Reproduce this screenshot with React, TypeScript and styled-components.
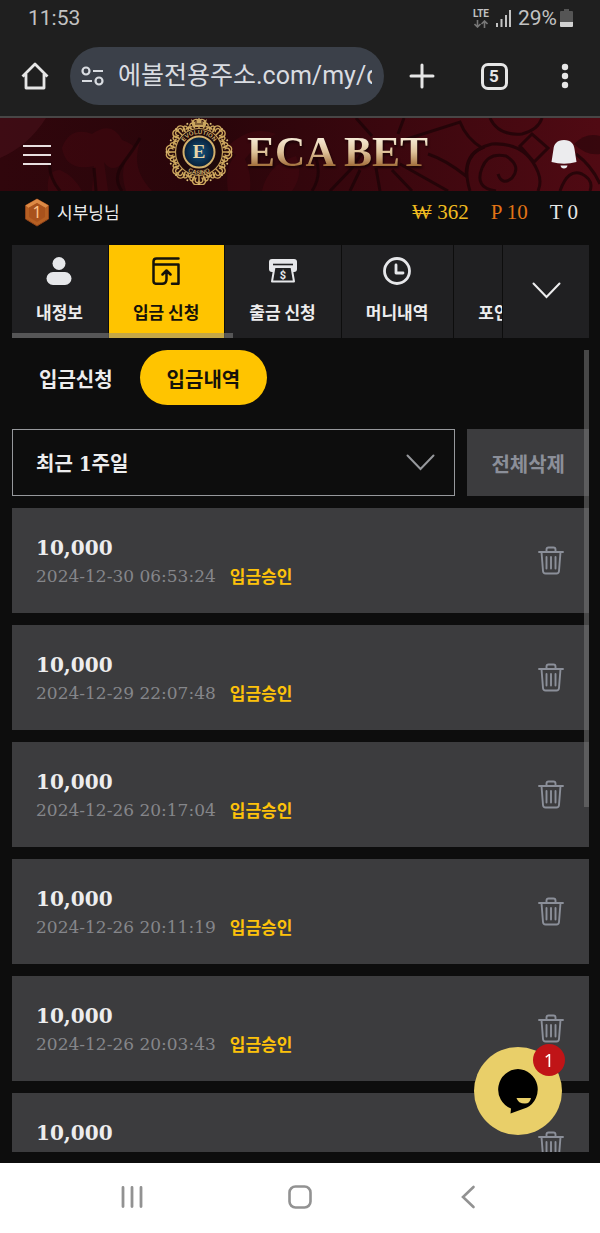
import React from "react";
import styled, { createGlobalStyle, css } from "styled-components";

const sans = `Roboto, "Noto Sans CJK KR", sans-serif`;
const korean = `"Noto Sans CJK KR", sans-serif`;
const serif = `"DejaVu Serif", "Noto Sans CJK KR", serif`;
const serifNarrow = `"DejaVu Serif Condensed", "Noto Sans CJK KR", serif`;
const serifLight = `"Liberation Serif", "DejaVu Serif", serif`;

const GlobalStyle = createGlobalStyle`
  *, *::before, *::after { box-sizing: border-box; }
  body { margin: 0; background: #0d0d0d; }
  button, input, select { font: inherit; color: inherit; margin: 0; padding: 0; border: 0; background: none; border-radius: 0; }
  button { cursor: pointer; }
  h1, p { margin: 0; }
  svg { display: block; flex: none; }
`;

const Screen = styled.div`
  display: flex;
  flex-direction: column;
  height: 100vh;
  background: #0d0d0d;
  color: #ededee;
  font-family: ${korean};
`;

/* ---------- Phone status bar and browser toolbar ---------- */

const StatusBar = styled.div`
  display: flex;
  align-items: center;
  justify-content: space-between;
  height: 36px;
  padding: 0 27px 0 28px;
  background: #1f1f1f;
  color: #c2c2c2;
  font: 21px/24px ${sans};
`;

const StatusIcons = styled.div`
  display: flex;
  align-items: center;
  gap: 6px;
`;

const Network = styled.div`
  display: flex;
  flex-direction: column;
  align-items: center;
  font: 700 10px/10px ${sans};
  gap: 1px;
`;

const Battery = styled.div`
  display: flex;
  align-items: center;
  gap: 3px;
`;

const BrowserBar = styled.div`
  display: flex;
  align-items: center;
  flex: none;
  height: 82px;
  padding: 0 21px;
  background: #1f1f1f;
  border-bottom: 2px solid #484646;
  color: #e6e6e6;
`;

const Address = styled.label`
  display: flex;
  align-items: center;
  flex: 1;
  min-width: 0;
  height: 58px;
  margin-left: 21px;
  padding: 0 12px 0 11px;
  gap: 14px;
  border-radius: 29px;
  background: #3b4049;
`;

const AddressInput = styled.input`
  flex: 1;
  min-width: 0;
  height: 40px;
  outline: none;
  color: #d9dce1;
  font: 25px/40px ${sans};
`;

const BrowserActions = styled.div`
  display: flex;
  align-items: center;
  justify-content: space-between;
  width: 172px;
  margin-left: 23px;
`;

const IconButton = styled.button`
  display: grid;
  place-items: center;
`;

const TabCount = styled.button`
  width: 27px;
  height: 27px;
  border: 3px solid #e6e6e6;
  border-radius: 7px;
  font: 700 17px/20px ${sans};
`;

/* ---------- Site header ---------- */

const Header = styled.header`
  position: relative;
  display: flex;
  align-items: center;
  justify-content: space-between;
  flex: none;
  height: 73px;
  padding: 0 23px;
  overflow: hidden;
  background: linear-gradient(90deg, #30060c 0%, #29050a 35%, #3b070e 65%, #500a13 100%);
`;

const HeaderArt = styled.svg`
  position: absolute;
  inset: 0;
  width: 100%;
  height: 100%;
`;

const HeaderButton = styled(IconButton)`
  position: relative;
`;

const Logo = styled.h1`
  position: relative;
  display: flex;
  align-items: center;
  gap: 14px;
  padding: 0 9px 6px 0;
`;

const Brand = styled.span`
  font: 700 42px/48px "Liberation Serif", serif;
  color: transparent;
  background: linear-gradient(180deg, #f7ecd8 20%, #dec29a 50%, #a06c38 80%);
  background-clip: text;
  -webkit-background-clip: text;
  filter: drop-shadow(1px 2px 1px #180205);
`;

const UserBar = styled.div`
  display: flex;
  align-items: center;
  flex: none;
  height: 42px;
  padding: 0 22px 0 24px;
  gap: 7px;
  font-size: 17px;
  line-height: 24px;
`;

const Balances = styled.div`
  display: flex;
  gap: 22px;
  margin-left: auto;
  font: 21px/24px ${serifLight};
`;

const Balance = styled.span<{ $color: string }>`
  color: ${(p) => p.$color};
`;

/* ---------- Account tabs ---------- */

const TabBar = styled.nav`
  display: flex;
  flex: none;
  gap: 1px;
  height: 93px;
  margin: 12px 11px 12px 12px;
`;

const TabStrip = styled.div`
  position: relative;
  display: flex;
  flex: 1;
  min-width: 0;
  gap: 1px;
  overflow: hidden;

  &::after {
    content: "";
    position: absolute;
    left: 0;
    bottom: 0;
    width: 45%;
    height: 5px;
    background: rgba(140, 140, 140, 0.5);
  }
`;

const Tab = styled.a<{ $active?: boolean }>`
  display: flex;
  flex: none;
  flex-direction: column;
  align-items: center;
  gap: 15px;
  padding: 12px 25px 0 24px;
  background: ${(p) => (p.$active ? "#ffc400" : "#202022")};
  color: ${(p) => (p.$active ? "#15120a" : "#ededee")};
  font-size: 17px;
  font-weight: 700;
  line-height: 24px;
  text-decoration: none;
  white-space: nowrap;
`;

const ExpandButton = styled(IconButton)`
  width: 86px;
  padding-bottom: 3px;
  background: #202022;
`;

/* ---------- Deposit history ---------- */

const Content = styled.main`
  position: relative;
  flex: 1;
  min-height: 0;
  margin: 0 11px 11px 12px;

  &::after {
    content: "";
    position: absolute;
    top: 0;
    right: 0;
    width: 5px;
    height: 57%;
    background: rgba(120, 120, 120, 0.55);
  }
`;

const Scroller = styled.div`
  height: 100%;
  overflow-y: auto;
  scrollbar-width: none;
`;

const SubTabs = styled.div`
  display: flex;
  margin-bottom: 24px;
`;

const SubTab = styled.button<{ $active?: boolean }>`
  height: 55px;
  padding: 2px 27px 0;
  border-radius: 28px;
  font: 700 20px/28px ${korean};
  ${(p) =>
    p.$active &&
    css`
      background: #ffc400;
      color: #15120a;
    `}
`;

const Filters = styled.div`
  display: flex;
  gap: 12px;
  height: 67px;
  margin-bottom: 12px;
`;

const SelectBox = styled.label`
  display: flex;
  align-items: center;
  flex: 1;
  padding-right: 19px;
  border: 1px solid #96989c;
`;

const Select = styled.select`
  appearance: none;
  flex: 1;
  height: 64px;
  padding: 2px 0 0 23px;
  outline: none;
  font: 700 20px/28px ${serifNarrow};
`;

const DeleteAll = styled.button`
  padding: 2px 24px 0;
  background: #3c3c3e;
  color: #8b8f99;
  font: 700 20px/28px ${korean};
`;

const List = styled.ul`
  display: flex;
  flex-direction: column;
  gap: 12px;
  margin: 0;
  padding: 0;
  list-style: none;
`;

const Row = styled.li`
  display: flex;
  align-items: center;
  justify-content: space-between;
  height: 105px;
  padding: 0 25px 0 24px;
  background: #3c3c3e;
  color: #8b8f99;
`;

const Entry = styled.div`
  padding-top: 3px;
`;

const Amount = styled.p`
  color: #ededee;
  font: 700 20px/28px ${serif};
`;

const Detail = styled.p`
  display: flex;
  gap: 14px;
  color: #85868a;
  font: 17px/28px ${serif};
`;

const Approved = styled.strong`
  color: #fdc20a;
  font-family: ${korean};
`;

/* ---------- Floating chat and phone navigation ---------- */

const ChatButton = styled.button`
  position: fixed;
  right: 38px;
  bottom: 98px;
  display: grid;
  place-items: center;
  width: 88px;
  height: 88px;
  border-radius: 50%;
  background: #e9cf69;
`;

const Badge = styled.span`
  position: absolute;
  top: -3px;
  right: -3px;
  width: 32px;
  height: 32px;
  border-radius: 50%;
  background: #c01417;
  color: #fff;
  font: 18px/32px "Noto Sans", sans-serif;
`;

const PhoneNav = styled.nav`
  display: flex;
  align-items: center;
  justify-content: space-around;
  flex: none;
  height: 70px;
  padding: 0 48px 3px;
  background: #fff;
`;

/* ---------- Drawings ---------- */

const Emblem = () => {
  const petals = Array.from({ length: 16 }, (_, i) => i * 22.5);
  return (
    <svg width="68" height="67" viewBox="-34 -34 68 67" aria-hidden="true">
      <defs>
        <radialGradient id="navy">
          <stop offset="0" stopColor="#165783" />
          <stop offset="1" stopColor="#071d35" />
        </radialGradient>
        <path id="arcTop" d="M-18 0A18 18 0 0 1 18 0" />
        <path id="arcBottom" d="M-22.500 0A22.500 22.500 0 0 0 22.500 0" />
      </defs>
      <circle r="27" fill="none" stroke="#2a0d0c" strokeWidth="7" />
      <g fill="none" stroke="#cfa95f" strokeWidth="1.4" strokeLinecap="round">
        {petals.map((a, i) => (
          <g key={a} transform={`rotate(${a})`}>
            <path
              d={
                i % 2
                  ? "M-5-24C-7-28-4-31-2-28.500S-4-26-3-26M5-24C7-28 4-31 2-28.500S4-26 3-26M-2-24L0-27L2-24"
                  : "M-5-25C-9-30-4-35 0-31.500C4-35 9-30 5-25M-3-26C-6-30 0-33 0-28C0-33 6-30 3-26M0-28V-24"
              }
            />
            <circle cy={i % 2 ? -30.5 : -32.5} r="1" fill="#e0c07a" stroke="none" />
          </g>
        ))}
      </g>
      <circle r="23.5" fill="#1f090a" stroke="#c5a05b" strokeWidth="1.2" />
      <circle r="15.500" fill="url(#navy)" stroke="#d2b06c" strokeWidth="2" />
      <path d="M-6-25L-8-33L-4-30L0-34L4-30L8-33L6-25Z" fill="#c9a55f" />
      <path d="M-4-28H4M-3-31V-29M3-31V-29" stroke="#3a1c10" strokeWidth="1" />
      <g fill="#d2b06c" fontFamily="Liberation Sans, sans-serif" fontSize="6" fontWeight="700" textAnchor="middle">
        <text>
          <textPath href="#arcTop" startOffset="50%">EVOLUTION</textPath>
        </text>
        <text>
          <textPath href="#arcBottom" startOffset="50%">CASINO</textPath>
        </text>
      </g>
      <text y="6" textAnchor="middle" fontFamily="Liberation Serif, serif" fontSize="19" fontWeight="700" fill="#ead7a6">
        E
      </text>
    </svg>
  );
};

const Ornaments = () => (
  <HeaderArt viewBox="0 0 600 73" preserveAspectRatio="none" aria-hidden="true">
    <path d="M0 0H46Q28 28 0 40Z" fill="#48101a" opacity="0.6" />
    <g fill="#4a0912" opacity="0.4">
      <path d="M62 30Q70 8 92 16Q112 2 122 22Q146 30 124 44Q112 56 104 44L108 73H92L94 48Q66 54 62 30Z" />
      <path d="M126 73Q116 44 140 24Q130 50 152 73ZM48 73Q46 52 60 52Q74 58 82 73ZM228 73Q224 44 240 34Q252 48 250 73ZM262 73Q268 46 296 38Q304 56 292 73Z" />
      <path d="M226 30Q250 6 276 16Q256 26 244 42Z" />
    </g>
    <g fill="none" stroke="#190306" strokeWidth="3" opacity="0.7">
      <path d="M60 73Q48 58 50 44M122 73Q112 60 124 44M124 44Q136 28 140 20M96 73L94 50" />
      <path d="M312 73Q322 58 316 40M330 73L352 50L368 26M360 52L350 73M376 50L380 73M392 52L412 73M400 46L448 73M356 0L372 18M404 0L398 16" />
      <path d="M404 22L460 4Q466 20 482 30Q466 36 466 58Q446 42 428 36" />
      <path d="M490 0Q498 18 522 16Q538 12 542 0M520 28L532 16L548 30L534 44ZM470 73Q458 34 492 26Q526 24 538 54Q542 64 538 73" />
      <path d="M482 50Q488 34 506 38Q522 48 512 60Q502 68 498 56M482 50Q474 70 496 73M560 73Q568 50 582 56Q594 62 590 73M576 36Q592 48 600 66" />
    </g>
    <path d="M574 26Q586 14 600 18V36Q586 38 574 26Z" fill="#2c060b" opacity="0.7" />
  </HeaderArt>
);

const Chevron = ({ color, stroke }: { color: string; stroke: number }) => (
  <svg width="29" height="17" viewBox="0 0 29 17" fill="none" stroke={color} strokeWidth={stroke} strokeLinecap="round" aria-hidden="true">
    <path d="M1.500 1.500L14.500 15L27.500 1.500" />
  </svg>
);

const Medal = () => (
  <svg width="26" height="29" viewBox="0 0 26 29" aria-hidden="true">
    <path d="M13 1L24.500 7.500V21L13 28L1.500 21V7.500Z" fill="#b65f22" stroke="#8e431a" strokeLinejoin="round" />
    <path d="M13 1L24.500 7.500L21 10L13 5L5 10L1.500 7.500Z" fill="#dd8a45" />
    <path d="M13 5L21 9.500V19L13 24L5 19V9.500Z" fill="#a9521c" />
    <text x="13" y="20" textAnchor="middle" fontFamily="Noto Sans, sans-serif" fontSize="16" fill="#ffc48a">1</text>
  </svg>
);

const Trash = () => (
  <svg width="26" height="29" viewBox="0 0 26 29" fill="none" stroke="#8b8f99" strokeWidth="1.9" strokeLinecap="round" strokeLinejoin="round" aria-hidden="true">
    <path d="M1 6H25M3.500 6L5 25Q5.200 27.500 7.500 27.500H18.500Q20.800 27.500 21 25L22.500 6M8.500 5.500V3.500Q8.500 1.500 10.500 1.500H15.500Q17.500 1.500 17.500 3.500V5.500M8.500 11V22.500M13 11V22.500M17.500 11V22.500" />
  </svg>
);

const PersonIcon = () => (
  <svg width="28" height="28" viewBox="0 0 28 28" fill="#e6e7ea" aria-hidden="true">
    <circle cx="14" cy="6.500" r="6.500" />
    <rect x="1.500" y="15" width="25" height="13" rx="6.500" />
  </svg>
);

const DepositIcon = () => (
  <svg width="28" height="28" viewBox="0 0 28 28" fill="none" stroke="#15120a" strokeWidth="2.500" strokeLinecap="round" strokeLinejoin="round" aria-hidden="true">
    <path d="M26.500 1.500H4.500Q1.500 1.500 1.500 4.500V24Q1.500 26.800 4.500 26.800H10Q14.500 26.800 14.500 22V15M1.500 7.500H26.500V26.800H20M10.500 17.500L14.500 13.500L18.500 17.500" />
  </svg>
);

const WithdrawIcon = () => (
  <svg width="28" height="28" viewBox="0 0 28 28" aria-hidden="true">
    <path d="M3 2H25Q28 2 28 5V12Q28 15 25 15H3Q0 15 0 12V5Q0 2 3 2Z" fill="#e6e7ea" />
    <path d="M4 7.500H24" stroke="#202022" strokeWidth="1.600" />
    <path d="M5.500 10H22.500L25 24.500H3Z" fill="#202022" stroke="#e6e7ea" strokeWidth="2" strokeLinejoin="round" />
    <text x="14" y="21.500" textAnchor="middle" fontFamily="Roboto, sans-serif" fontSize="11" fontWeight="700" fill="#e6e7ea">$</text>
  </svg>
);

const ClockIcon = () => (
  <svg width="28" height="28" viewBox="0 0 28 28" fill="none" stroke="#e6e7ea" strokeWidth="2.800" strokeLinecap="round" strokeLinejoin="round" aria-hidden="true">
    <circle cx="14" cy="14" r="12.500" />
    <path d="M13 8V16H20" />
  </svg>
);

const PointIcon = () => <svg width="28" height="28" aria-hidden="true" />;

const tabs = [
  { label: "내정보", icon: <PersonIcon /> },
  { label: "입금 신청", icon: <DepositIcon />, active: true },
  { label: "출금 신청", icon: <WithdrawIcon /> },
  { label: "머니내역", icon: <ClockIcon /> },
  { label: "포인트내역", icon: <PointIcon /> },
];

const deposits = [
  "2024-12-30 06:53:24",
  "2024-12-29 22:07:48",
  "2024-12-26 20:17:04",
  "2024-12-26 20:11:19",
  "2024-12-26 20:03:43",
  "2024-12-26 19:58:20",
];

export default function App() {
  return (
    <Screen>
      <GlobalStyle />
      <StatusBar>
        <span>11:53</span>
        <StatusIcons>
          <Network>
            LTE
            <svg width="14" height="8" viewBox="0 0 14 8" fill="none" stroke="#777" strokeWidth="1.600" aria-hidden="true">
              <path d="M3.500 0V7M.5 4L3.500 7L6.500 4M10.500 8V1M7.500 4L10.500 1L13.500 4" />
            </svg>
          </Network>
          <svg width="17" height="17" viewBox="0 0 17 17" stroke="#c2c2c2" strokeWidth="2" aria-hidden="true">
            <path d="M2 17V13M6.500 17V9M11 17V5M15 17V0" />
          </svg>
          <Battery>
            29%
            <svg width="13" height="18" viewBox="0 0 13 18" aria-hidden="true">
              <path d="M4 0H9V2H12Q13 2 13 3V13H0V3Q0 2 1 2H4Z" fill="#555" />
              <path d="M0 13H13V17Q13 18 12 18H1Q0 18 0 17Z" fill="#d2d2d2" />
            </svg>
          </Battery>
        </StatusIcons>
      </StatusBar>

      <BrowserBar>
        <IconButton aria-label="홈">
          <svg width="28" height="28" viewBox="0 0 28 28" fill="none" stroke="#e6e6e6" strokeWidth="2.800" strokeLinejoin="round" aria-hidden="true">
            <path d="M1.500 14.500L14 2L26.500 14.500M5 12V26H23V12" />
          </svg>
        </IconButton>
        <Address>
          <svg width="23" height="20" viewBox="0 0 23 20" fill="none" stroke="#d9dce1" strokeWidth="2.200" aria-hidden="true">
            <circle cx="5" cy="5" r="3.500" />
            <circle cx="18" cy="15" r="3.500" />
            <path d="M12 5H22M1 15H11" />
          </svg>
          <AddressInput aria-label="주소" readOnly value="에볼전용주소.com/my/deposit" />
        </Address>
        <BrowserActions>
          <IconButton aria-label="새 탭">
            <svg width="30" height="26" viewBox="0 0 30 26" stroke="#e6e6e6" strokeWidth="3" strokeLinecap="round" aria-hidden="true">
              <path d="M4 13H26M15 2V24" />
            </svg>
          </IconButton>
          <TabCount>5</TabCount>
          <IconButton aria-label="메뉴">
            <svg width="28" height="26" viewBox="0 0 28 26" fill="#e6e6e6" aria-hidden="true">
              <circle cx="14" cy="4" r="3.200" />
              <circle cx="14" cy="13" r="3.200" />
              <circle cx="14" cy="22" r="3.200" />
            </svg>
          </IconButton>
        </BrowserActions>
      </BrowserBar>

      <Header>
        <Ornaments />
        <HeaderButton aria-label="전체 메뉴">
          <svg width="28" height="20" viewBox="0 0 28 20" stroke="#e8dfe0" strokeWidth="2" aria-hidden="true">
            <path d="M0 1H28M0 10H28M0 19H28" />
          </svg>
        </HeaderButton>
        <Logo>
          <Emblem />
          <Brand>ECA BET</Brand>
        </Logo>
        <HeaderButton aria-label="알림">
          <svg width="26" height="29" viewBox="0 0 26 29" fill="#ececee" aria-hidden="true">
            <path d="M13 0C20 0 23 4 23.500 9L25.500 22Q13 25.500.5 22L2.500 9C3 4 6 0 13 0ZM9.500 25.500H16.500Q16 28.500 13 28.500T9.500 25.500Z" />
          </svg>
        </HeaderButton>
      </Header>

      <UserBar>
        <Medal />
        <span>시부닝님</span>
        <Balances>
          <Balance $color="#f0bb20">₩ 362</Balance>
          <Balance $color="#e27416">P 10</Balance>
          <Balance $color="#e6e6e6">T 0</Balance>
        </Balances>
      </UserBar>

      <TabBar>
        <TabStrip>
          {tabs.map((t) => (
            <Tab key={t.label} href="#" $active={t.active}>
              {t.icon}
              {t.label}
            </Tab>
          ))}
        </TabStrip>
        <ExpandButton aria-label="더보기">
          <Chevron color="#ededee" stroke={2} />
        </ExpandButton>
      </TabBar>

      <Content>
        <Scroller>
          <SubTabs>
            <SubTab>입금신청</SubTab>
            <SubTab $active>입금내역</SubTab>
          </SubTabs>
          <Filters>
            <SelectBox>
              <Select aria-label="기간" defaultValue="week">
                <option value="week">최근 1주일</option>
              </Select>
              <Chevron color="#96989c" stroke={2} />
            </SelectBox>
            <DeleteAll>전체삭제</DeleteAll>
          </Filters>
          <List>
            {deposits.map((date) => (
              <Row key={date}>
                <Entry>
                  <Amount>10,000</Amount>
                  <Detail>
                    <time>{date}</time>
                    <Approved>입금승인</Approved>
                  </Detail>
                </Entry>
                <IconButton aria-label="삭제">
                  <Trash />
                </IconButton>
              </Row>
            ))}
          </List>
        </Scroller>
      </Content>

      <PhoneNav>
        <IconButton aria-label="최근 앱">
          <svg width="24" height="24" viewBox="0 0 24 24" stroke="#929292" strokeWidth="2.800" strokeLinecap="round" aria-hidden="true">
            <path d="M3 2.500V21.500M12 2.500V21.500M21 2.500V21.500" />
          </svg>
        </IconButton>
        <IconButton aria-label="홈 화면">
          <svg width="24" height="24" viewBox="0 0 24 24" fill="none" stroke="#929292" strokeWidth="2.600" aria-hidden="true">
            <rect x="1.500" y="1.500" width="21" height="21" rx="6" />
          </svg>
        </IconButton>
        <IconButton aria-label="뒤로">
          <svg width="24" height="24" viewBox="0 0 24 24" fill="none" stroke="#929292" strokeWidth="2.600" strokeLinecap="round" aria-hidden="true">
            <path d="M17.500 2L7 12L17.500 22" />
          </svg>
        </IconButton>
      </PhoneNav>

      <ChatButton aria-label="채팅 상담">
        <svg width="42" height="46" viewBox="0 0 42 46" aria-hidden="true">
          <path d="M21 1A20.500 20.500 0 0 0 14 40.500L13.500 45.500L30 39.500A20.500 20.500 0 0 0 21 1Z" fill="#000" />
          <path d="M19.500 30H34Q33 35.500 28 35.500Q21 35.500 19.500 30Z" fill="#e9cf69" />
        </svg>
        <Badge>1</Badge>
      </ChatButton>
    </Screen>
  );
}
